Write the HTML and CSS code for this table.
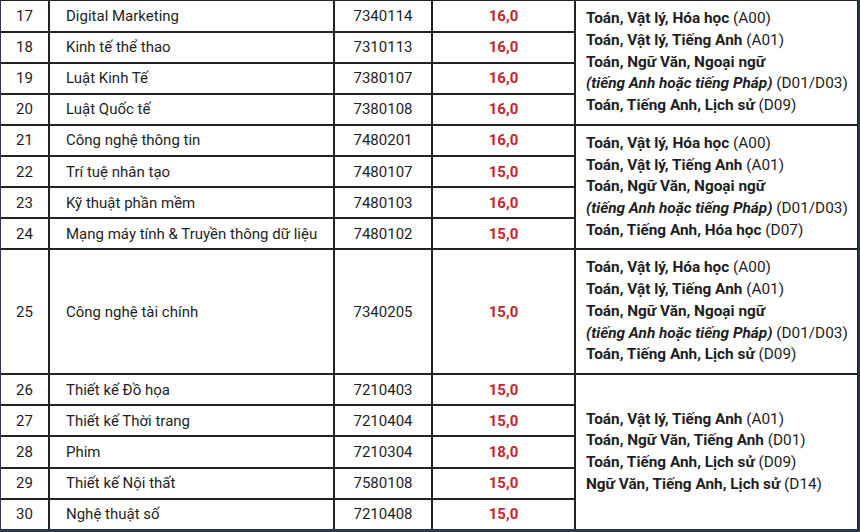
FILE: index.html
```html
<!DOCTYPE html>
<html lang="vi">
<head>
<meta charset="utf-8">
<link rel="stylesheet" href="styles.css">
</head>
<body>
<div class="frame">
<table class="grid">
<colgroup>
<col class="c-no"><col class="c-name"><col class="c-code"><col class="c-score"><col class="c-subj">
</colgroup>
<tbody>
<tr><td class="no">17</td><td class="name">Digital Marketing</td><td class="code">7340114</td><td class="score">16,0</td>
<td class="subj" rowspan="4">
<div><b>Toán, Vật lý, Hóa học</b> (A00)</div>
<div><b>Toán, Vật lý, Tiếng Anh</b> (A01)</div>
<div><b>Toán, Ngữ Văn, Ngoại ngữ</b></div>
<div><b><i>(tiếng Anh hoặc tiếng Pháp)</i></b> (D01/D03)</div>
<div><b>Toán, Tiếng Anh, Lịch sử</b> (D09)</div>
</td></tr>
<tr><td class="no">18</td><td class="name">Kinh tế thể thao</td><td class="code">7310113</td><td class="score">16,0</td></tr>
<tr><td class="no">19</td><td class="name">Luật Kinh Tế</td><td class="code">7380107</td><td class="score">16,0</td></tr>
<tr><td class="no">20</td><td class="name">Luật Quốc tế</td><td class="code">7380108</td><td class="score">16,0</td></tr>

<tr><td class="no">21</td><td class="name">Công nghệ thông tin</td><td class="code">7480201</td><td class="score">16,0</td>
<td class="subj" rowspan="4">
<div><b>Toán, Vật lý, Hóa học</b> (A00)</div>
<div><b>Toán, Vật lý, Tiếng Anh</b> (A01)</div>
<div><b>Toán, Ngữ Văn, Ngoại ngữ</b></div>
<div><b><i>(tiếng Anh hoặc tiếng Pháp)</i></b> (D01/D03)</div>
<div><b>Toán, Tiếng Anh, Hóa học</b> (D07)</div>
</td></tr>
<tr><td class="no">22</td><td class="name">Trí tuệ nhân tạo</td><td class="code">7480107</td><td class="score">15,0</td></tr>
<tr><td class="no">23</td><td class="name">Kỹ thuật phần mềm</td><td class="code">7480103</td><td class="score">16,0</td></tr>
<tr><td class="no">24</td><td class="name">Mạng máy tính &amp; Truyền thông dữ liệu</td><td class="code">7480102</td><td class="score">15,0</td></tr>

<tr class="tall"><td class="no">25</td><td class="name">Công nghệ tài chính</td><td class="code">7340205</td><td class="score">15,0</td>
<td class="subj">
<div><b>Toán, Vật lý, Hóa học</b> (A00)</div>
<div><b>Toán, Vật lý, Tiếng Anh</b> (A01)</div>
<div><b>Toán, Ngữ Văn, Ngoại ngữ</b></div>
<div><b><i>(tiếng Anh hoặc tiếng Pháp)</i></b> (D01/D03)</div>
<div><b>Toán, Tiếng Anh, Lịch sử</b> (D09)</div>
</td></tr>

<tr><td class="no">26</td><td class="name">Thiết kế Đồ họa</td><td class="code">7210403</td><td class="score">15,0</td>
<td class="subj" rowspan="5">
<div><b>Toán, Vật lý, Tiếng Anh</b> (A01)</div>
<div><b>Toán, Ngữ Văn, Tiếng Anh</b> (D01)</div>
<div><b>Toán, Tiếng Anh, Lịch sử</b> (D09)</div>
<div><b>Ngữ Văn, Tiếng Anh, Lịch sử</b> (D14)</div>
</td></tr>
<tr><td class="no">27</td><td class="name">Thiết kế Thời trang</td><td class="code">7210404</td><td class="score">15,0</td></tr>
<tr><td class="no">28</td><td class="name">Phim</td><td class="code">7210304</td><td class="score">18,0</td></tr>
<tr><td class="no">29</td><td class="name">Thiết kế Nội thất</td><td class="code">7580108</td><td class="score">15,0</td></tr>
<tr><td class="no">30</td><td class="name">Nghệ thuật số</td><td class="code">7210408</td><td class="score">15,0</td></tr>
</tbody>
</table>
</div>
</body>
</html>
```

FILE: styles.css
```css
html, body {
  margin: 0;
  padding: 0;
  background: #ffffff;
}
body {
  width: 860px;
  height: 532px;
  overflow: hidden;
  font-family: Roboto, "Liberation Sans", sans-serif;
  color: #1e1e1e;
}
.frame {
  width: 860px;
  height: 532px;
  box-sizing: border-box;
  border-left: 1px solid #2b3550;
  border-right: 2px solid #2b3550;
  border-bottom: 3px solid #2b3550;
  background: #fff;
  overflow: hidden;
}
.grid {
  border-collapse: collapse;
  table-layout: fixed;
  width: 857px;
}
.c-no { width: 48px; }
.c-name { width: 285px; }
.c-code { width: 98px; }
.c-score { width: 143px; }
.c-subj { width: 283px; }
.grid tr { height: 31.1px; }
.grid tr.tall { height: 125px; }
.grid td {
  border: 2px solid #222222;
  padding: 0;
  font-size: 15px;
  line-height: 20px;
  vertical-align: middle;
}
.grid tr:first-child td { border-top-width: 1px; }
.grid td:first-child { border-left: none; }
.no { text-align: center; }
.name { padding-left: 16px !important; }
.code { text-align: center; }
.score {
  text-align: center;
  font-weight: 700;
  color: #c4262e;
}
.grid .subj {
  padding-left: 10px;
  font-size: 15.35px;
}
.subj div {
  line-height: 21.7px;
  white-space: nowrap;
}
.subj b { font-weight: 700; }
```
